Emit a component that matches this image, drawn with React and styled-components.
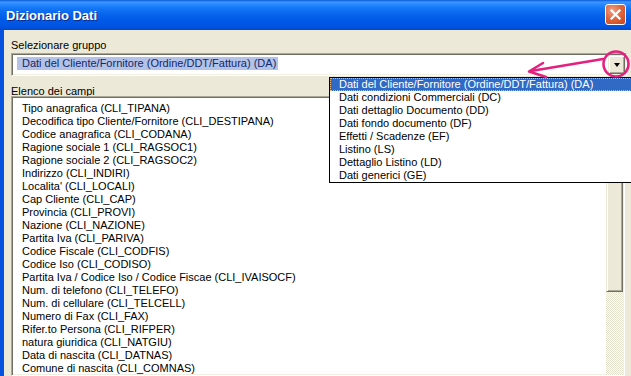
import React from 'react';
import styled, { createGlobalStyle } from 'styled-components';

const GlobalStyle = createGlobalStyle`
  html, body {
    margin: 0;
    padding: 0;
  }
  body {
    overflow: hidden;
    background: #ECE9D8;
    font-family: "Liberation Sans", Arial, sans-serif;
    font-size: 11px;
    color: #000;
  }
`;

const groups = [
    'Dati del Cliente/Fornitore (Ordine/DDT/Fattura) (DA)',
    'Dati condizioni Commerciali (DC)',
    'Dati dettaglio Documento (DD)',
    'Dati fondo documento (DF)',
    'Effetti / Scadenze (EF)',
    'Listino (LS)',
    'Dettaglio Listino (LD)',
    'Dati generici (GE)',
];

const fields = [
    'Tipo anagrafica (CLI_TIPANA)',
    'Decodifica tipo Cliente/Fornitore (CLI_DESTIPANA)',
    'Codice anagrafica (CLI_CODANA)',
    'Ragione sociale 1 (CLI_RAGSOC1)',
    'Ragione sociale 2 (CLI_RAGSOC2)',
    'Indirizzo (CLI_INDIRI)',
    "Localita' (CLI_LOCALI)",
    'Cap Cliente (CLI_CAP)',
    'Provincia (CLI_PROVI)',
    'Nazione (CLI_NAZIONE)',
    'Partita Iva (CLI_PARIVA)',
    'Codice Fiscale (CLI_CODFIS)',
    'Codice Iso (CLI_CODISO)',
    'Partita Iva / Codice Iso / Codice Fiscae (CLI_IVAISOCF)',
    'Num. di telefono (CLI_TELEFO)',
    'Num. di cellulare (CLI_TELCELL)',
    'Numero di Fax (CLI_FAX)',
    'Rifer.to Persona (CLI_RIFPER)',
    'natura giuridica (CLI_NATGIU)',
    'Data di nascita (CLI_DATNAS)',
    'Comune di nascita (CLI_COMNAS)',
];

const CloseIcon = () => (
    <svg width="11" height="11" viewBox="0 0 11 11">
        <path d="M1.5 1.5 L9.5 9.5 M9.5 1.5 L1.5 9.5" stroke="#fff" strokeWidth="2.2" strokeLinecap="square" />
    </svg>
);

const Annotation = () => (
    <Overlay width="631" height="376" viewBox="0 0 631 376">
        <circle cx="616" cy="64" r="12.5" fill="none" stroke="#E4217F" strokeWidth="2.6" />
        <path d="M603 59 L531 71" stroke="#E4217F" strokeWidth="2.6" strokeLinecap="round" fill="none" />
        <path d="M543 63 L529 71.5 L546 77" stroke="#E4217F" strokeWidth="2.6" strokeLinecap="round" strokeLinejoin="round" fill="none" />
    </Overlay>
);

const App = () => (
    <Window>
        <GlobalStyle />
        <TitleBar>
            <Title>Dizionario Dati</Title>
            <CloseButton><CloseIcon /></CloseButton>
        </TitleBar>
        <Frame>
            <Body>
                <Label $gap={1}>Selezionare gruppo</Label>
                <Combo>
                    <Selected>{groups[0]}</Selected>
                    <DropButton><Arrow /></DropButton>
                </Combo>

                <Label $top={9} $gap={-2}>Elenco dei campi</Label>
                <ListBox>
                    <Items>
                        {fields.map((f) => <Item key={f}>{f}</Item>)}
                    </Items>
                    <ScrollBar>
                        <ScrollButton />
                        <Thumb />
                    </ScrollBar>
                </ListBox>

                <DropList>
                    {groups.map((g, i) => (
                        <DropItem key={g} $active={i === 0}>{g}</DropItem>
                    ))}
                </DropList>
            </Body>
        </Frame>
        <Annotation />
    </Window>
);

const Window = styled.div`
    position: relative;
    width: 631px;
    height: 376px;
    display: flex;
    flex-direction: column;
    overflow: hidden;
`;

const TitleBar = styled.div`
    flex: none;
    height: 30px;
    box-sizing: border-box;
    display: flex;
    align-items: center;
    justify-content: space-between;
    padding: 0 5px 1px 6px;
    background: linear-gradient(to bottom,
        #0A5AD8 0px, #3D95FF 2px, #2A8AFF 4px, #1577F6 8px,
        #0865EE 14px, #0059E7 20px, #0055E3 26px, #0048CF 30px);
`;

const Title = styled.div`
    color: #fff;
    font-family: "Liberation Sans", Arial, sans-serif;
    font-weight: bold;
    font-size: 13px;
    text-shadow: 1px 1px 0 #0B2E8C;
    padding-top: 1px;
`;

const CloseButton = styled.div`
    width: 21px;
    height: 21px;
    box-sizing: border-box;
    border: 1px solid #fff;
    border-radius: 3px;
    display: flex;
    align-items: center;
    justify-content: center;
    background: radial-gradient(circle at 35% 30%, #F1A389 0%, #E2683F 45%, #C8411A 100%);
`;

const Frame = styled.div`
    flex: 1;
    display: flex;
    min-height: 0;
    border-left: 4px solid #0651DE;
`;

const Body = styled.div`
    position: relative;
    flex: 1;
    display: flex;
    flex-direction: column;
    padding: 9px 0 0 7px;
    background: #ECE9D8;
    min-width: 0;
`;

const Label = styled.div`
    height: 13px;
    line-height: 13px;
    margin-top: ${p => p.$top || 0}px;
    margin-bottom: ${p => p.$gap || 0}px;
    white-space: nowrap;
`;

const Sunken = styled.div`
    box-sizing: border-box;
    background: #fff;
    border: 1px solid;
    border-color: #ACA899 #fff #fff #ACA899;
    box-shadow: inset 1px 1px 0 #716F64, inset -1px -1px 0 #F1EFE2;
`;

const Combo = styled(Sunken)`
    flex: none;
    width: 616px;
    height: 23px;
    display: flex;
    align-items: flex-start;
    padding-right: 1px;
`;

const Selected = styled.span`
    margin: 3px 0 0 5px;
    padding: 0 2px 0 5px;
    line-height: 13px;
    background: #B3C2E6;
    color: #13286A;
    white-space: nowrap;
`;

const Raised = styled.div`
    box-sizing: border-box;
    background: #ECE9D8;
    border: 1px solid;
    border-color: #ECE9D8 #716F64 #716F64 #ECE9D8;
    box-shadow: inset 1px 1px 0 #fff, inset -1px -1px 0 #ACA899;
`;

const DropButton = styled(Raised)`
    margin: 1px 0 0 auto;
    width: 17px;
    height: 19px;
    display: flex;
    align-items: center;
    justify-content: center;
`;

const Arrow = styled.span`
    width: 0;
    height: 0;
    border-left: 3.5px solid transparent;
    border-right: 3.5px solid transparent;
    border-top: 4px solid #000;
    margin-top: 1px;
`;

const ListBox = styled(Sunken)`
    flex: 1;
    width: 614px;
    min-height: 0;
    display: flex;
    overflow: hidden;
`;

const Items = styled.div`
    flex: 1;
    padding: 5px 0 0 10px;
`;

const Item = styled.div`
    height: 13px;
    line-height: 13px;
    white-space: nowrap;
`;

const ScrollBar = styled.div`
    flex: none;
    width: 17px;
    margin-right: 1px;
    display: flex;
    flex-direction: column;
    background-color: #fff;
    background-image: repeating-conic-gradient(#E4E1CD 0 25%, #fff 0 50%);
    background-size: 2px 2px;
`;

const ScrollButton = styled(Raised)`
    height: 17px;
`;

const Thumb = styled(Raised)`
    height: 178px;
`;

const DropList = styled.div`
    position: absolute;
    left: 325px;
    top: 47px;
    width: 320px;
    box-sizing: border-box;
    border: 1px solid #000;
    background: #fff;
`;

const DropItem = styled.div`
    height: 13px;
    line-height: 13px;
    padding-left: 9px;
    white-space: nowrap;
    background: ${p => (p.$active ? '#316AC5' : 'transparent')};
    color: ${p => (p.$active ? '#fff' : '#000')};
    outline: ${p => (p.$active ? '1px dotted #E9B77A' : 'none')};
    outline-offset: -1px;
`;

const Overlay = styled.svg`
    position: absolute;
    left: 0;
    top: 0;
    pointer-events: none;
`;

export default App;
